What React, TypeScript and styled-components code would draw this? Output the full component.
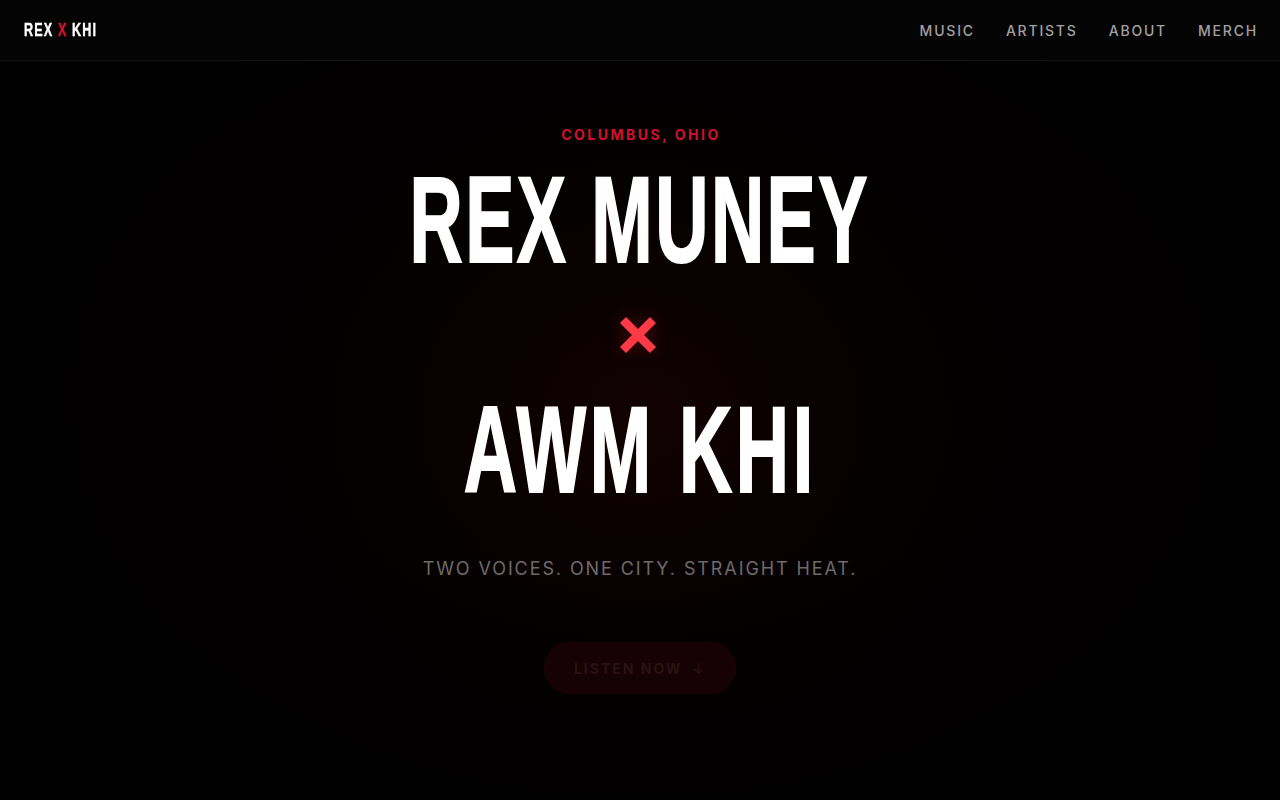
import React from "react";
import styled, { createGlobalStyle } from "styled-components";

const GlobalStyle = createGlobalStyle`
  html, body {
    margin: 0;
    padding: 0;
    background: #000;
  }
  body {
    font-family: Inter, "Liberation Sans", sans-serif;
    -webkit-font-smoothing: antialiased;
  }
`;

const NAV_LINKS = ["MUSIC", "ARTISTS", "ABOUT", "MERCH"];

const App: React.FC = () => {
  return (
    <>
      <GlobalStyle />
      <Page>
        <Header>
          <Logo>
            REX <LogoX>X</LogoX> KHI
          </Logo>
          <Nav>
            {NAV_LINKS.map((link) => (
              <NavLink key={link} href="#">
                {link}
              </NavLink>
            ))}
          </Nav>
        </Header>
        <Hero>
          <Eyebrow>COLUMBUS, OHIO</Eyebrow>
          <Headline>REX MUNEY</Headline>
          <Cross viewBox="0 0 40 40" aria-hidden>
            <path d="M5 5 L35 35 M35 5 L5 35" />
          </Cross>
          <Headline $second>AWM KHI</Headline>
          <Tagline>TWO VOICES. ONE CITY. STRAIGHT HEAT.</Tagline>
          <ListenButton>
            LISTEN NOW <Arrow>↓</Arrow>
          </ListenButton>
        </Hero>
      </Page>
    </>
  );
};

export default App;

const Page = styled.div`
  min-height: 100vh;
  display: flex;
  flex-direction: column;
  overflow: hidden;
  background:
    radial-gradient(ellipse 380px 340px at 50% 52%, rgba(60, 0, 6, 0.24), rgba(25, 0, 3, 0.1) 60%, transparent 100%),
    radial-gradient(ellipse 900px 620px at 50% 50%, #050101, #000 100%);
`;

const Header = styled.header`
  height: 61px;
  box-sizing: border-box;
  display: flex;
  align-items: center;
  justify-content: space-between;
  padding: 0 22px 0 24px;
  border-bottom: 1px solid #141414;
  background: #040404;
`;

const Logo = styled.div`
  font-family: "Liberation Sans Narrow", "Liberation Sans", sans-serif;
  font-weight: 700;
  font-size: 18px;
  letter-spacing: 1.6px;
  color: #fff;
  -webkit-text-stroke: 0.4px #fff;
  display: inline-block;
  transform: scaleX(0.7);
  transform-origin: left center;
  white-space: pre;
`;

const LogoX = styled.span`
  color: #e0102a;
  -webkit-text-stroke: 0.4px #e0102a;
`;

const Nav = styled.nav`
  display: flex;
  gap: 31px;
`;

const NavLink = styled.a`
  font-family: Inter, sans-serif;
  font-size: 14px;
  font-weight: 500;
  letter-spacing: 1.8px;
  color: #a3a0a0;
  text-decoration: none;
`;

const Hero = styled.main`
  display: flex;
  flex-direction: column;
  align-items: center;
  padding-top: 65px;
`;

const Eyebrow = styled.div`
  font-family: Inter, sans-serif;
  font-size: 14px;
  line-height: 17px;
  font-weight: 700;
  letter-spacing: 2.5px;
  color: #d3102c;
  margin-left: 2px;
`;

const Headline = styled.h1<{ $second?: boolean }>`
  margin: ${(p) => (p.$second ? "33px" : "15px")} 0 0;
  font-family: "Liberation Sans Narrow", "Liberation Sans", sans-serif;
  font-weight: 700;
  font-size: 123px;
  line-height: 123px;
  letter-spacing: ${(p) => (p.$second ? "6px" : "4px")};
  color: #fff;
  -webkit-text-stroke: 2px #fff;
  white-space: nowrap;
  transform: scaleX(0.6);
`;

const Cross = styled.svg`
  width: 40px;
  height: 40px;
  margin-top: 34px;
  margin-left: -4px;
  fill: none;
  stroke: #ff3a47;
  stroke-width: 8.5;
  filter: drop-shadow(0 0 8px rgba(255, 40, 60, 0.25));
`;

const Tagline = styled.p`
  margin: 44px 0 0;
  font-family: Inter, sans-serif;
  font-size: 18px;
  line-height: 27px;
  font-weight: 400;
  letter-spacing: 1.9px;
  color: #6f6b6b;
`;

const ListenButton = styled.button`
  margin-top: 60px;
  width: 192px;
  height: 52px;
  border-radius: 26px;
  border: 1px solid #1e0306;
  background: #160205;
  color: #2c1114;
  font-family: Inter, sans-serif;
  font-size: 14px;
  font-weight: 700;
  letter-spacing: 2px;
  display: flex;
  align-items: center;
  justify-content: center;
  gap: 10px;
  cursor: pointer;
`;

const Arrow = styled.span`
  font-weight: 400;
`;
